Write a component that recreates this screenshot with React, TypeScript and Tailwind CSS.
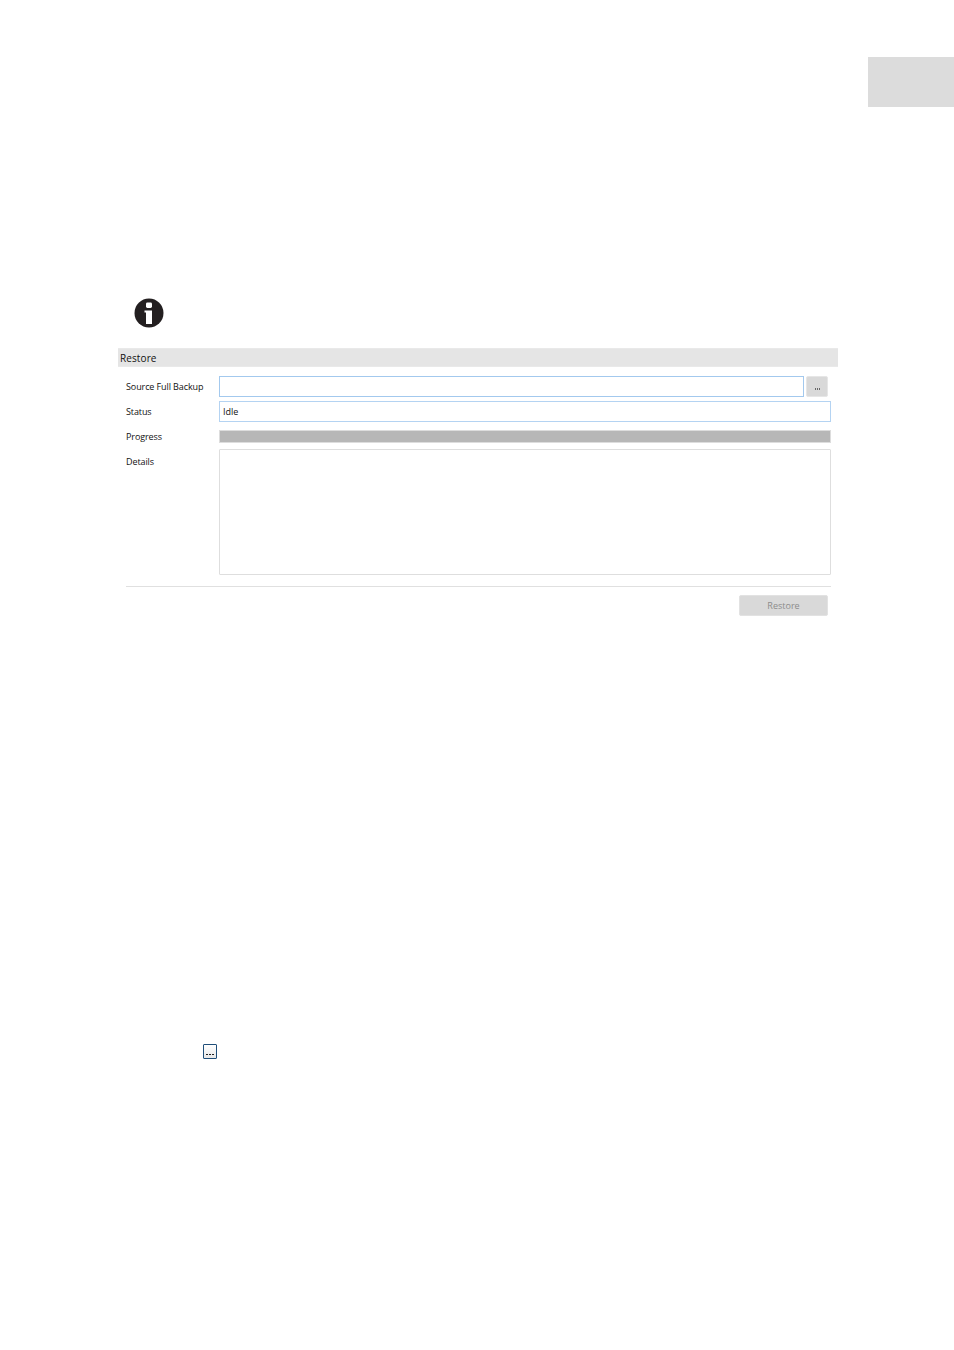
function InfoIcon() {
  return (
    <svg width="30" height="30" viewBox="0 0 30 30" className="ml-[134px] mt-[191px] shrink-0">
      <circle cx="15" cy="15" r="14.5" fill="#231f20" />
      <rect x="12" y="4.5" width="6" height="5.5" rx="1.4" fill="#fff" />
      <path d="M10.5 12.5H18V26h-6V14.5h-1.5z" fill="#fff" />
    </svg>
  );
}

const labelClass = "w-[93px] shrink-0 text-[9px] leading-[12px] text-[#111] tracking-[-0.1px]";

export default function App() {
  return (
    <div
      className="w-[954px] h-[1350px] bg-white flex flex-col overflow-hidden"
      style={{ fontFamily: '"Open Sans", "Noto Sans", sans-serif' }}
    >
      {/* Side tab */}
      <div className="ml-auto mt-[57px] w-[86px] h-[50px] shrink-0 bg-[#dcdcdc]" />

      <InfoIcon />

      {/* Restore panel */}
      <div className="ml-[118px] mt-[20px] w-[720px] flex flex-col">
        <div className="h-[19px] bg-[#e5e5e5] border-y border-[#e9e9e9] pl-[2px] text-[10px] leading-[18px] tracking-[0.1px] text-[#111]">
          Restore
        </div>

        <div className="pl-[8px] pr-[7px] pt-[9px] flex flex-col">
          <div className="flex h-[21px]">
            <span className={`${labelClass} pt-[5px]`}>Source Full Backup</span>
            <div className="w-[585px] h-[21px] border border-[#a3c9ee]" />
            <div className="ml-[2px] w-[22px] h-[21px] rounded-[2px] bg-[#d9d9d9] border border-[#e6e6e6] flex items-end justify-center gap-[1px] pb-[6px]">
              <span className="w-[1px] h-[2px] bg-[#666]" />
              <span className="w-[1px] h-[2px] bg-[#666]" />
              <span className="w-[1px] h-[2px] bg-[#666]" />
            </div>
          </div>

          <div className="flex h-[21px] mt-[4px]">
            <span className={`${labelClass} pt-[5px]`}>Status</span>
            <div className="flex-1 h-[21px] border border-[#b4d3f2] pl-[3px] text-[9px] leading-[19px] text-[#111]">
              Idle
            </div>
          </div>

          <div className="flex h-[13px] mt-[8px]">
            <span className={`${labelClass} pt-[1px]`}>Progress</span>
            <div className="flex-1 h-[13px] bg-[#b7b7b7] border border-[#dddddd]" />
          </div>

          <div className="flex h-[126px] mt-[6px]">
            <span className={`${labelClass} pt-[7px]`}>Details</span>
            <div className="flex-1 border border-[#dedede] rounded-[1px]" />
          </div>

          <div className="mt-[11px] h-px bg-[#e0e0e0]" />

          <div className="flex justify-end mt-[8px] pr-[3px]">
            <div className="w-[89px] h-[21px] rounded-[2px] bg-[#d9d9d9] border border-[#e2e2e2] text-center text-[9px] leading-[19px] text-[#8c8c8c]">
              Restore
            </div>
          </div>
        </div>
      </div>

      {/* Inline browse button reference */}
      <div className="ml-[203px] mt-[428px] w-[14px] h-[15px] rounded-[1px] border border-[#1f4e79] bg-gradient-to-b from-white to-[#e8e8e8] flex items-end justify-center gap-[1px] pb-[3px]">
        <span className="w-[2px] h-[1px] bg-[#222]" />
        <span className="w-[2px] h-[1px] bg-[#222]" />
        <span className="w-[2px] h-[1px] bg-[#222]" />
      </div>
    </div>
  );
}
